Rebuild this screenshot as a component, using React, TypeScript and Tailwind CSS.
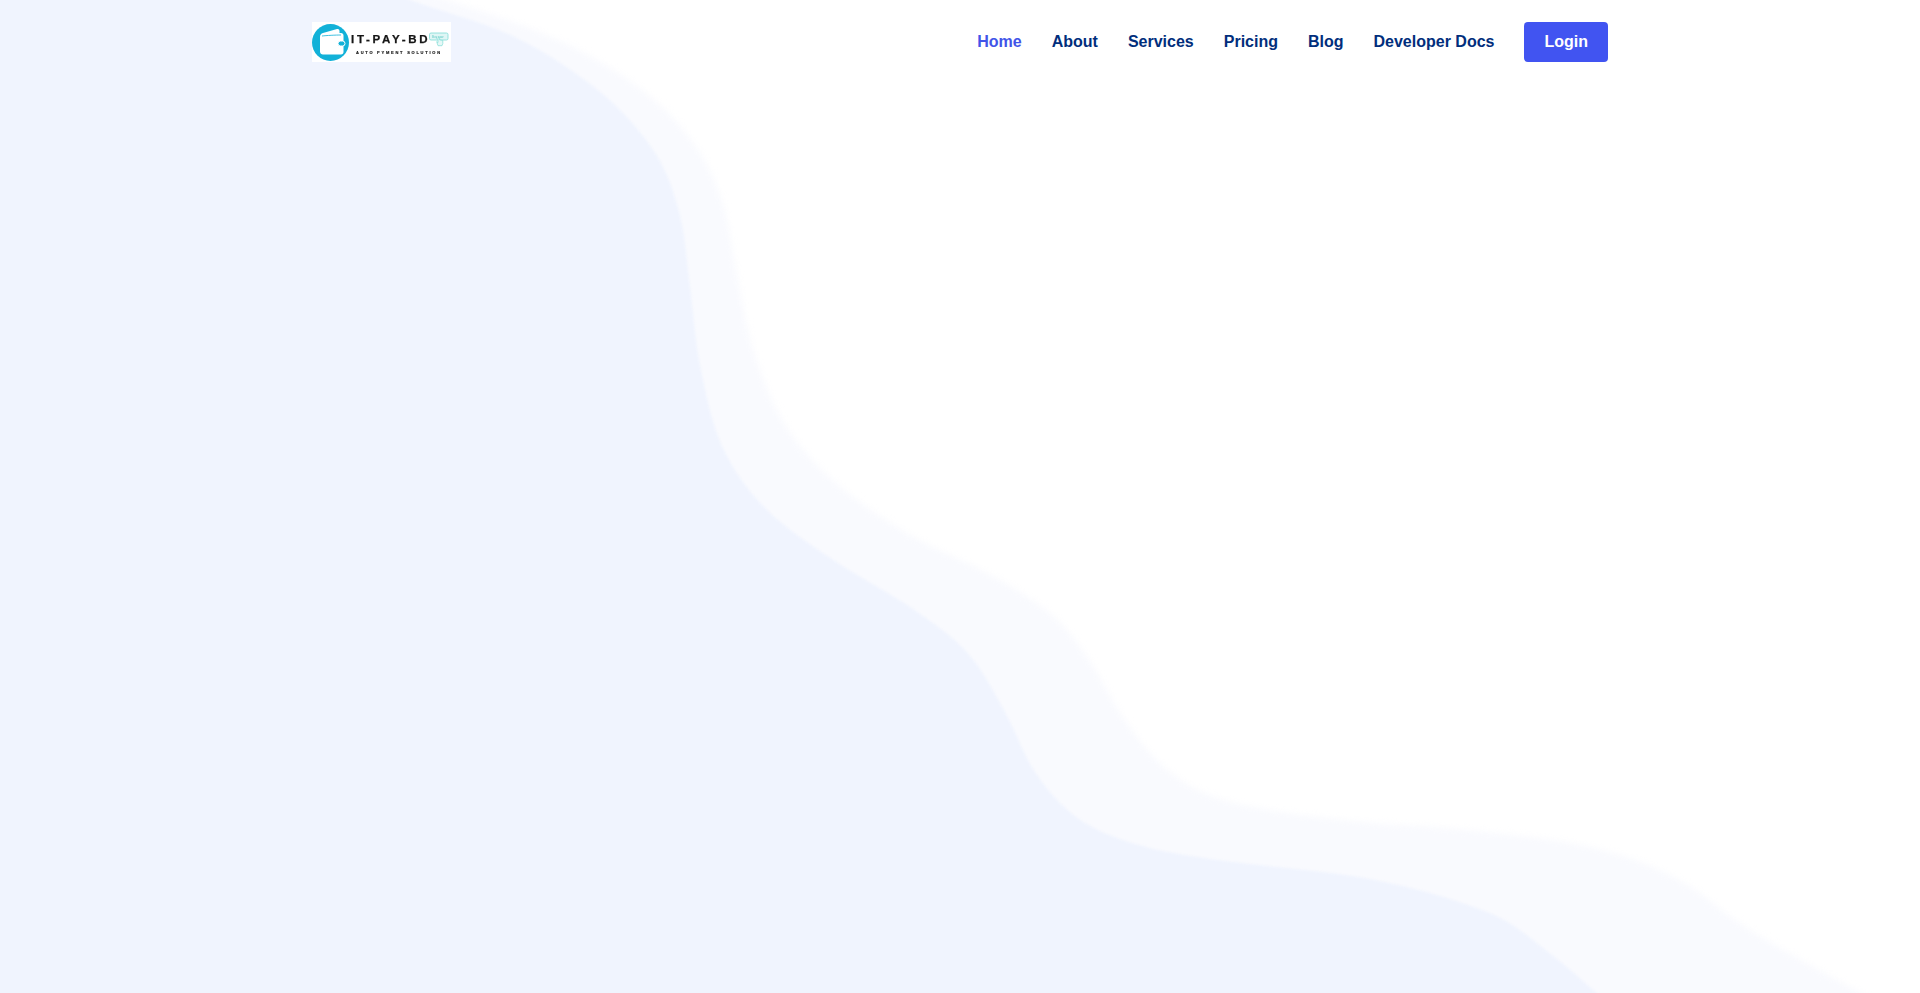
const SCALE = 1920 / 1568;
const outer: [number, number][] = [
  [320, -16], [365, 0], [450, 30], [520, 70], [565, 115], [590, 165], [601, 220], [615, 285], [640, 345], [680, 392],
  [740, 435], [810, 470], [860, 503], [890, 540], [920, 590], [955, 630], [1005, 655], [1100, 670], [1200, 678],
  [1300, 692], [1370, 718], [1430, 760], [1520, 811], [1560, 830],
].map(([x, y]) => [x * SCALE, y * SCALE]);
const inner: [number, number][] = [
  [300, -16], [335, 0], [420, 30], [490, 75], [535, 125], [555, 175], [563, 230], [572, 300], [590, 365], [625, 415],
  [680, 457], [745, 497], [790, 533], [820, 580], [845, 630], [880, 668], [930, 690], [1000, 703], [1120, 718],
  [1215, 745], [1265, 778], [1304, 811], [1325, 830],
].map(([x, y]) => [x * SCALE, y * SCALE]);

function smooth(p: number[][]) {
  let d = `M-30 -30L${p[0][0]} -30L${p[0][0]} ${p[0][1]}`;
  for (let i = 0; i < p.length - 1; i++) {
    const a = p[Math.max(i - 1, 0)];
    const b = p[i];
    const c = p[i + 1];
    const e = p[Math.min(i + 2, p.length - 1)];
    d += `C${b[0] + (c[0] - a[0]) / 6} ${b[1] + (c[1] - a[1]) / 6} ${c[0] - (e[0] - b[0]) / 6} ${c[1] - (e[1] - b[1]) / 6} ${c[0]} ${c[1]}`;
  }
  return d + "L-30 1023Z";
}

function Logo() {
  return (
    <svg width="139" height="40" viewBox="0 0 139 40" className="block bg-white blur-[0.35px]">
      <circle cx="18.5" cy="20.5" r="18.5" fill="#12b1d8" />
      <path d="M8 15c0-2 1-3.500 3-4l14-4c1.500-.4 2.500.5 2.500 2v2H29c1.500 0 2.500 1 2.500 2.500V30c0 1.500-1 2.500-2.500 2.500H11c-1.700 0-3-1.300-3-3z" fill="#fff" />
      <path d="M10 14c4-.5 14-1 19-1" stroke="#12b1d8" strokeWidth="0.8" fill="none" />
      <rect x="26" y="19" width="7" height="5" rx="2.500" fill="#12b1d8" stroke="#fff" strokeWidth="1" />
      <text x="39" y="21" fontFamily="'Liberation Sans', Arial, sans-serif" fontWeight="700" fontSize="11.500" letterSpacing="2.700" fill="#161616" stroke="#161616" strokeWidth="0.25">
        IT-PAY-BD
      </text>
      <text x="44" y="31.500" fontFamily="'Liberation Sans', Arial, sans-serif" fontWeight="700" fontSize="4" letterSpacing="1.750" fill="#161616" stroke="#161616" strokeWidth="0.15">
        AUTO PYMENT SOLUTION
      </text>
      <rect x="117.500" y="11" width="18.500" height="7" rx="1.500" fill="#dff6f5" stroke="#7fdcd6" strokeWidth="0.8" />
      <text x="120" y="15.500" fontFamily="'Liberation Sans', Arial, sans-serif" fontSize="3" fill="#5cc8c2">
        Buy now
      </text>
      <path d="M126 15.500v5l-1.300-.8 1.300 4h4l.8-2.200v-3l-3.200-.6v-2.400z" fill="#e6f8f7" stroke="#7fdcd6" strokeWidth="0.7" />
    </svg>
  );
}

export default function App() {
  const links = ["About", "Services", "Pricing", "Blog", "Developer Docs"];
  return (
    <div className="relative h-[993px] overflow-hidden bg-white font-['Liberation_Sans',Arial,sans-serif]">
      <svg className="absolute inset-0" width="1920" height="993" viewBox="0 0 1920 993">
        <path d={smooth(outer)} fill="#f9fafe" className="blur-[3px]" />
        <path d={smooth(inner)} fill="#f0f4fe" className="blur-[1px]" />
      </svg>
      <header className="relative mx-auto flex w-[1320px] items-center justify-between px-3 pt-[22px]">
        <Logo />
        <nav className="flex items-center gap-[30px] text-base font-bold text-[#012e7c]">
          <a className="text-[#4154e8]">Home</a>
          {links.map((l) => (
            <a key={l}>{l}</a>
          ))}
          <a className="rounded-[4px] bg-[#4154f1] px-5 py-[10px] leading-5 text-white">Login</a>
        </nav>
      </header>
    </div>
  );
}
